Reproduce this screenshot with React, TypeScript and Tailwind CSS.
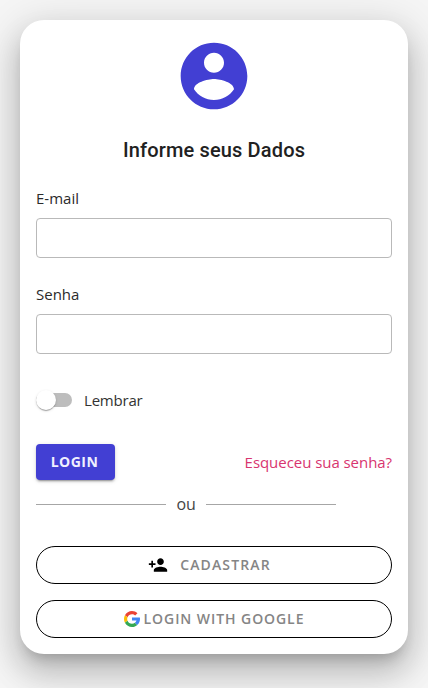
const ui = "font-['Open_Sans','Noto_Sans',sans-serif]";

function AccountCircle() {
  return (
    <svg viewBox="0 0 24 24" className="mx-auto block size-20 fill-[#423fd3]">
      <path d="M12 2C6.48 2 2 6.48 2 12s4.48 10 10 10 10-4.48 10-10S17.52 2 12 2zm0 3c1.66 0 3 1.34 3 3s-1.34 3-3 3-3-1.34-3-3 1.34-3 3-3zm0 14.2c-2.5 0-4.71-1.28-6-3.22.03-1.99 4-3.08 6-3.08 1.99 0 5.97 1.09 6 3.08-1.29 1.94-3.5 3.22-6 3.22z" />
    </svg>
  );
}

function PersonAdd() {
  return (
    <svg viewBox="0 0 24 24" className="mr-3 size-5 shrink-0 fill-black">
      <path d="M15 12c2.21 0 4-1.79 4-4s-1.79-4-4-4-4 1.79-4 4 1.79 4 4 4zm-9-2V7H4v3H1v2h3v3h2v-3h3v-2H6zm9 4c-2.67 0-8 1.34-8 4v2h16v-2c0-2.66-5.33-4-8-4z" />
    </svg>
  );
}

function GoogleLogo() {
  return (
    <svg viewBox="4 4 40 40" className="mr-1 size-4 shrink-0">
      <path fill="#EA4335" d="M24 12c3.06 0 5.84 1.15 7.96 3.04l5.66-5.66C34.05 6.05 29.27 4 24 4 16.32 4 9.66 8.34 6.31 14.69l6.57 4.82C14.66 15.11 18.96 12 24 12z" />
      <path fill="#FBBC05" d="M6.31 14.69C4.83 17.47 4 20.64 4 24c0 3.37.84 6.56 2.33 9.35l6.53-5.02A12 12 0 0 1 12 24c0-1.59.31-3.11.88-4.49z" />
      <path fill="#34A853" d="M24 44c5.17 0 9.86-1.98 13.41-5.19l-6.19-5.24A11.9 11.9 0 0 1 24 36c-5.12 0-9.45-3.23-11.16-7.75l-6.51 5.1C9.71 39.67 16.23 44 24 44z" />
      <path fill="#4285F4" d="M43.61 20H24v8h11.3a12 12 0 0 1-4.08 5.57l6.19 5.24C36.97 39.2 44 34 44 24c0-1.34-.14-2.65-.39-4z" />
    </svg>
  );
}

function Field({ label, type }: { label: string; type: string }) {
  return (
    <label className="block">
      <span className="block h-6 text-[15px] leading-6 text-[#2b2b2b]">{label}</span>
      <input type={type} className="mt-2 block h-10 w-full rounded border border-[#b9b9b9] bg-white px-3 outline-none" />
    </label>
  );
}

export default function App() {
  return (
    <div className={`${ui} h-[688px] w-[428px] overflow-hidden bg-[#f5f5f5] p-5`}>
      <main className="h-[634px] rounded-[24px] bg-white px-4 pt-4 shadow-[0px_10px_13px_-6px_rgba(0,0,0,0.2),0px_20px_31px_3px_rgba(0,0,0,0.14),0px_8px_38px_7px_rgba(0,0,0,0.12)]">
        <AccountCircle />
        <h1 className="mt-[18px] h-8 text-center font-[Roboto,sans-serif] text-xl leading-8 font-medium tracking-[0.15px] text-[#212121]">
          Informe seus Dados
        </h1>
        <div className="mt-5 flex flex-col gap-6">
          <Field label="E-mail" type="email" />
          <Field label="Senha" type="password" />
        </div>
        <div className="mt-[34px] flex h-6 items-center text-[15px] tracking-[-0.2px] text-[#333]">
          <span className="flex h-3.5 w-9 items-center rounded-full bg-[#bdbdbd]">
            <span className="size-5 shrink-0 rounded-full bg-white shadow-[0px_2px_1px_-1px_rgba(0,0,0,0.2),0px_1px_1px_0px_rgba(0,0,0,0.14),0px_1px_3px_0px_rgba(0,0,0,0.12)]" />
          </span>
          <span className="ml-3">Lembrar</span>
        </div>
        <div className="mt-8 flex h-9 items-center justify-between">
          <button className="h-9 w-[79px] rounded bg-[#423fd3] pr-0.5 text-sm font-bold tracking-[0.5px] text-[#f0f0ff] shadow-[0px_3px_1px_-2px_rgba(0,0,0,0.2),0px_2px_2px_0px_rgba(0,0,0,0.14),0px_1px_5px_0px_rgba(0,0,0,0.12)]">
            LOGIN
          </button>
          <a className="text-[15px] tracking-[-0.05px] text-[#d8346f]">Esqueceu sua senha?</a>
        </div>
        <div className="mt-3 flex h-6 items-center text-base text-[#444]">
          <span className="h-px w-[130px] bg-[#a6a6a6]" />
          <span className="w-10 text-center tracking-[-0.2px]">ou</span>
          <span className="h-px w-[130px] bg-[#a6a6a6]" />
        </div>
        <div className="mt-[30px] flex flex-col gap-4 text-sm font-semibold text-[#858585]">
          <button className="flex h-[38px] items-center justify-center rounded-full border border-black pr-[9px] tracking-[1.15px]">
            <PersonAdd />
            <span>CADASTRAR</span>
          </button>
          <button className="flex h-[38px] items-center justify-center rounded-full border border-black tracking-[0.93px]">
            <GoogleLogo />
            <span>LOGIN WITH GOOGLE</span>
          </button>
        </div>
      </main>
    </div>
  );
}
